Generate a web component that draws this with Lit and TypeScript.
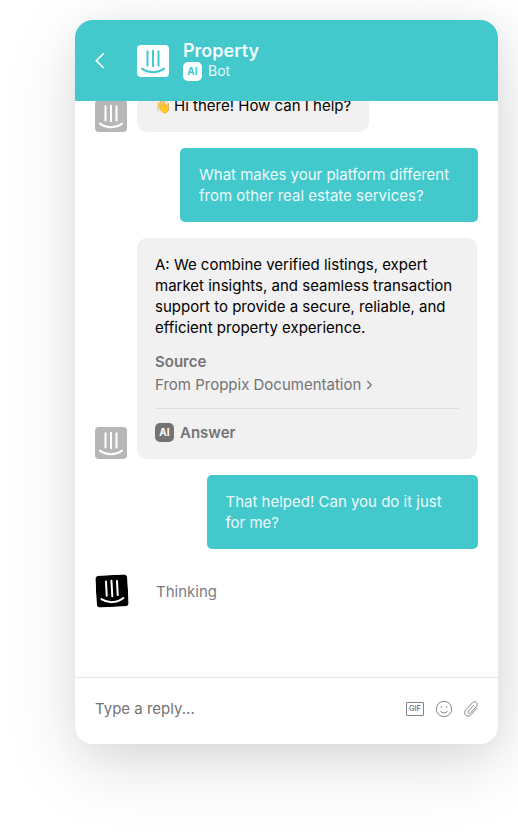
import { LitElement, html, css, svg } from "lit";
import { customElement, property } from "lit/decorators.js";

@customElement("bot-mark")
class BotMark extends LitElement {
  static styles = css`
    :host {
      display: block;
      flex: none;
      width: 32px;
      height: 32px;
      --tile: #b7b7b7;
      --ink: #fff;
    }
    :host([variant="header"]) {
      --tile: #fff;
      --ink: #43c8cc;
    }
    :host([variant="active"]) {
      --tile: #000;
      transform: rotate(-3deg);
    }
    svg {
      display: block;
    }
    .tile {
      fill: var(--tile);
    }
    .lines {
      fill: none;
      stroke: var(--ink);
      stroke-width: 2;
      stroke-linecap: round;
    }
  `;

  @property({ reflect: true }) variant = "muted";

  render() {
    return html`<svg width="32" height="32" viewBox="0 0 32 32">
      <rect class="tile" width="32" height="32" rx="4" />
      <path class="lines" d="M10.5 6.2v14.2M16 5.7v15.6M21.5 6.2v14.2M5 23.6c6.4 4.7 15.6 4.7 22 0" />
    </svg>`;
  }
}

const backIcon = svg`<svg class="back" width="12" height="18" viewBox="0 0 12 18"><path d="M9.8 1.4 2.2 8.7l7.6 7.3" fill="none" stroke="#fff" stroke-width="1.6"/></svg>`;

const chevron = svg`<svg class="chevron" width="7" height="10" viewBox="0 0 7 10"><path d="M1.3 1 5.3 5l-4 4" fill="none" stroke="#737376" stroke-width="1.2"/></svg>`;

const smileIcon = svg`<svg width="18" height="18" viewBox="0 0 18 18" fill="none" stroke="#86868b"><circle cx="9" cy="9" r="7.7"/><path d="M5.5 11.2c1.6 2.3 5.4 2.3 7 0" stroke-linecap="round"/><path d="M6.4 6.5v1.3M11.6 6.5v1.3" stroke-width="1.3"/></svg>`;

const clipIcon = svg`<svg width="16" height="18" viewBox="0 0 16 18" fill="none" stroke="#86868b" stroke-linecap="round" stroke-linejoin="round"><path d="M10.7 5.4 5.4 11.2c-1.2 1.5.6 3.2 2 1.9l6.1-6.7c2.6-3-1.4-6.4-4.1-3.6L2.9 9.6c-3.7 4.3 1.5 8.8 5.2 4.9l6-6.3"/></svg>`;

@customElement("app-root")
class AppRoot extends LitElement {
  static styles = css`
    :host {
      display: block;
      box-sizing: border-box;
      width: 518px;
      height: 838px;
      padding: 20px 20px 94px 75px;
      overflow: hidden;
      background: #fff;
      font: 400 15px/21px Inter, "Liberation Sans", sans-serif;
      color: #000;
    }
    .card {
      display: flex;
      flex-direction: column;
      height: 724px;
      border-radius: 18px;
      background: #fff;
      box-shadow: 0 20px 72px rgba(0, 0, 0, 0.13), 4px 6px 36px rgba(0, 0, 0, 0.06);
    }
    header {
      display: flex;
      align-items: center;
      flex: none;
      box-sizing: border-box;
      height: 81px;
      padding-left: 19px;
      border-radius: 18px 18px 0 0;
      background: #43c8cc;
      color: #fff;
    }
    .back {
      margin-right: 31px;
    }
    .who {
      margin-left: 14px;
    }
    .name {
      font-size: 18px;
      font-weight: 600;
      line-height: 22px;
      color: #f2fcfc;
    }
    .role {
      display: flex;
      align-items: center;
      gap: 6px;
      height: 20px;
      margin-top: -1px;
      font-size: 14px;
      line-height: 20px;
      color: #e8f9f9;
    }
    .badge {
      width: 19px;
      height: 19px;
      border-radius: 5px;
      background: #fff;
      color: #43c8cc;
      font-size: 10px;
      font-weight: 700;
      line-height: 19px;
      text-align: center;
    }
    .log {
      display: flex;
      flex-direction: column;
      justify-content: flex-end;
      gap: 16px;
      flex: 1;
      min-height: 0;
      box-sizing: border-box;
      padding: 0 20px 70px;
      overflow: hidden;
    }
    .row {
      display: flex;
      align-items: flex-end;
      gap: 10px;
      flex: none;
    }
    .bot {
      box-sizing: border-box;
      padding: 16px 18px;
      border-radius: 10px;
      background: #f1f1f1;
    }
    .emoji {
      margin-right: -1.2px;
      font-size: 13px;
      line-height: 1;
    }
    .full {
      width: 340px;
    }
    .user {
      align-self: flex-end;
      box-sizing: border-box;
      flex: none;
      padding: 16px 19px;
      border-radius: 5px;
      background: #43c8cc;
      color: #ecfafa;
    }
    .long {
      width: 298px;
    }
    .short {
      width: 271.5px;
    }
    .source {
      margin-top: 13px;
      color: #737376;
    }
    .strong {
      font-weight: 600;
      color: #737376;
    }
    .link {
      display: flex;
      align-items: center;
      gap: 5px;
      margin-top: 2px;
    }
    .answer {
      display: flex;
      align-items: center;
      gap: 6px;
      margin-top: 13px;
      padding-top: 13px;
      border-top: 1px solid #dfdfdf;
    }
    .answer .badge {
      background: #737376;
      color: #fff;
    }
    .thinking {
      align-items: center;
      gap: 28px;
      margin: 10px 0 0 1px;
      color: #7c7c7f;
    }
    footer {
      display: flex;
      align-items: center;
      gap: 11px;
      flex: none;
      box-sizing: border-box;
      height: 67px;
      padding: 0 19px 4px 20px;
      border-top: 1px solid #e6e6e6;
      color: #737376;
    }
    .hint {
      flex: 1;
      margin-top: -2px;
    }
    .tools {
      display: flex;
      align-items: center;
      gap: 11px;
    }
    .tools svg:last-child {
      margin-left: -1px;
    }
    .gif {
      box-sizing: border-box;
      width: 18px;
      height: 14px;
      border: 1px solid #808086;
      border-radius: 1px;
      font-size: 7.5px;
      font-weight: 500;
      line-height: 12px;
      text-align: center;
    }
  `;

  render() {
    return html`<div class="card">
      <header>
        ${backIcon}
        <bot-mark variant="header"></bot-mark>
        <div class="who">
          <div class="name">Property</div>
          <div class="role"><span class="badge">AI</span><span>Bot</span></div>
        </div>
      </header>
      <div class="log">
        <div class="row">
          <bot-mark></bot-mark>
          <div class="bot"><span class="emoji">👋</span> Hi there! How can I help?</div>
        </div>
        <div class="user long">What makes your platform different<br />from other real estate services?</div>
        <div class="row">
          <bot-mark></bot-mark>
          <div class="bot full">
            <div>A: We combine verified listings, expert<br />market insights, and seamless transaction<br />support to provide a secure, reliable, and<br />efficient property experience.</div>
            <div class="source">
              <div class="strong">Source</div>
              <div class="link">From Proppix Documentation ${chevron}</div>
            </div>
            <div class="answer"><span class="badge">AI</span><span class="strong">Answer</span></div>
          </div>
        </div>
        <div class="user short">That helped! Can you do it just<br />for me?</div>
        <div class="row thinking">
          <bot-mark variant="active"></bot-mark>
          <span>Thinking</span>
        </div>
      </div>
      <footer>
        <span class="hint">Type a reply...</span>
        <div class="tools"><span class="gif">GIF</span>${smileIcon}${clipIcon}</div>
      </footer>
    </div>`;
  }
}
